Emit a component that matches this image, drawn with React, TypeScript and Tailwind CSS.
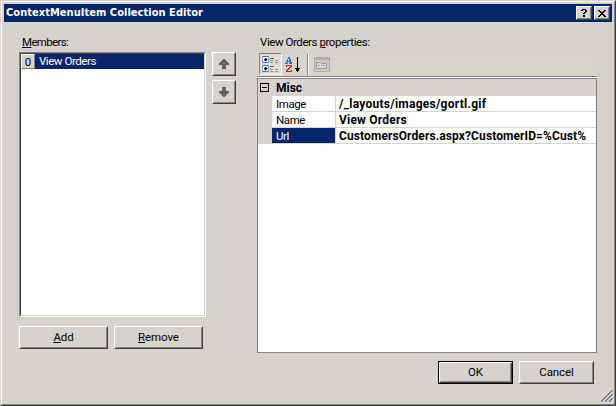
import type { ReactNode } from 'react';

const raised =
  'border border-t-white border-l-white border-r-[#404040] border-b-[#404040]';
const raisedInner =
  'h-full w-full border border-t-[#d6d3ce] border-l-[#d6d3ce] border-r-[#848284] border-b-[#848284] flex items-center justify-center';

function Raised({ className, children, label }: { className: string; children: ReactNode; label?: string }) {
  return (
    <button aria-label={label} className={`${raised} ${className} block bg-[#d6d3ce]`}>
      <span className={raisedInner}>{children}</span>
    </button>
  );
}

function Row({ name, value, spacing, selected }: { name: string; value: string; spacing: string; selected?: boolean }) {
  return (
    <div className="flex h-4">
      <div className="w-[14px] bg-[#d6d3ce]" />
      <div
        className={`w-[63px] border-b border-[#d6d3ce] pl-1 leading-[16px] tracking-[-0.4px] ${selected ? 'bg-[#08246b] text-white' : 'bg-white'}`}
      >
        {name}
      </div>
      <div
        className={`flex-1 whitespace-nowrap border-b border-l border-[#d6d3ce] pl-[3px] text-[12px] font-bold leading-[16px] ${spacing}`}
      >
        {value}
      </div>
    </div>
  );
}

function Arrow({ down }: { down?: boolean }) {
  return (
    <svg width="10" height="10" viewBox="0 0 10 10" className={down ? 'rotate-180' : ''} shapeRendering="crispEdges">
      <path d="M4 0h2v1h1v1h1v1h1v1h1v2H7v4H3V6H0V4h1V3h1V2h1V1h1z" fill="#636163" />
    </svg>
  );
}

export default function App() {
  return (
    <div className="h-[406px] w-[616px] border border-t-[#d6d3ce] border-l-[#d6d3ce] border-r-[#404040] border-b-[#404040] bg-[#d6d3ce] font-[Roboto,'Liberation_Sans',Arial,sans-serif] text-[11.5px] tracking-[-0.1px] text-black">
      <div className="relative flex h-full w-full flex-col border border-t-white border-l-white border-r-[#848284] border-b-[#848284] p-[2px]">
        <header className="flex h-[18px] shrink-0 items-center bg-[#08246b] pl-[2px] pr-[2px]">
          <h1 className="flex-1 whitespace-nowrap font-['DejaVu_Sans_Condensed','DejaVu_Sans',sans-serif] text-[11px] font-bold leading-[18px] tracking-[0.04px] text-white">
            ContextMenuItem Collection Editor
          </h1>
          <Raised label="Help" className="mr-[2px] h-[14px] w-4">
            <svg width="6" height="8" viewBox="0 0 6 8" shapeRendering="crispEdges">
              <path d="M1 0h4v1h1v2H5v1H4v1H2V4h1V3h1V1H2v1H0V1h1zM2 6h2v2H2z" />
            </svg>
          </Raised>
          <Raised label="Close" className="h-[14px] w-4">
            <svg width="8" height="7" viewBox="0 0 8 7" shapeRendering="crispEdges">
              <path d="M0 0h2v1h1v1h2V1h1V0h2v1H7v1H6v1H5v1h1v1h1v1h1v1H6V6H5V5H3v1H2v1H0V6h1V5h1V4h1V3H2V2H1V1H0z" />
            </svg>
          </Raised>
        </header>

        <main className="flex h-[330px] pl-[15px] pt-[14px]">
          <section className="w-[187px]">
            <div className="h-4 pl-[3px] leading-[13px] tracking-[-0.65px]">
              <span className="underline">M</span>embers:
            </div>
            <div className="h-[265px] border border-t-[#848284] border-l-[#848284] border-r-white border-b-white">
              <div className="h-full border border-t-[#404040] border-l-[#404040] border-r-[#d6d3ce] border-b-[#d6d3ce] bg-white">
                <div className="flex h-[15px] bg-[#08246b] leading-[15px] text-white">
                  <div className="h-[15px] w-[14px] border border-t-white border-l-white border-r-[#848284] border-b-[#848284] bg-[#d6d3ce] text-center leading-[14px] text-black">
                    0
                  </div>
                  <span className="pl-1 tracking-[-0.45px]">View Orders</span>
                </div>
              </div>
            </div>
            <div className="mt-[9px] flex gap-[6px]">
              <Raised className="h-[23px] w-[89px]"><span><span className="underline">A</span>dd</span></Raised>
              <Raised className="h-[23px] w-[89px]"><span><span className="underline">R</span>emove</span></Raised>
            </div>
          </section>

          <div className="ml-[6px] mt-4 flex w-6 flex-col gap-1">
            <Raised label="Move up" className="h-6 w-6"><Arrow /></Raised>
            <Raised label="Move down" className="h-6 w-6"><Arrow down /></Raised>
          </div>

          <section className="ml-[21px] w-[340px]">
            <div className="h-4 pl-[3px] leading-[13px] tracking-[-0.44px]">
              View Orders <span className="underline">p</span>roperties:
            </div>
            <div className="flex h-[26px] items-center border-b border-white bg-[#d9d3ce] pl-[2px] shadow-[inset_0_-1px_0_#848284]">
              <div className="mb-[1px] flex h-[22px] w-[23px] items-center border border-t-[#848284] border-l-[#848284] border-r-white border-b-white bg-[#e1dbd6] pl-[2px]">
                <svg width="16" height="16" viewBox="0 0 16 16" shapeRendering="crispEdges">
                  <path d="M0 0h7v7H0zM0 9h7v7H0z" fill="#6ba6e7" />
                  <path d="M1 0h5v1H1zm0 6h5v1H1zM1 9h5v1H1zm0 6h5v1H1z" fill="#3975bd" />
                  <path d="M1 1h5v5H1zM1 10h5v5H1z" fill="white" />
                  <path d="M3 2h1v3H3zM2 3h3v1H2zM3 11h1v3H3zM2 12h3v1H2z" fill="black" stroke="black" strokeWidth=".4" />
                  <path d="M8 2h4v1H8zM8 10h4v1H8z" fill="#636163" />
                  <path d="M8 4h3v1H8zm5 0h3v1h-3zM8 6h3v1H8zm5 0h3v1h-3zM8 13h3v1H8zm5 0h3v1h-3zM8 15h3v1H8zm5 0h3v1h-3z" fill="#8c96a8" />
                </svg>
              </div>
              <svg className="ml-[3px]" width="16" height="16" viewBox="0 0 16 16" shapeRendering="crispEdges">
                <path d="M3 0h2v2h1v3h1v2H4V6h1V5H2v1h1v1H0V6h1V4h1V2h1zM3 2v2h1V2z" fill="#3969ad" fillRule="evenodd" />
                <path d="M1 8h6v2H6v1H5v1H4v1H3v1h3v-1h1v2H1v-2h1v-1h1v-1h1v-1h1V9H2v1H1z" fill="#a53c42" />
                <path d="M12 0h1v11h2v1h-1v2h-1v1h-1v-1h-1v-2h-1v-1h2z" />
              </svg>
              <div className="ml-[6px] mr-[5px] h-[22px] w-[2px] border-l border-[#848284] bg-white" />
              <svg width="16" height="15" viewBox="0 0 16 15" shapeRendering="crispEdges">
                <path d="M.5.5h15v14H.5z" fill="#cecbc6" stroke="#adaaa8" />
                <path d="M1 1h14v2H1z" fill="#b5b2ad" />
                <path d="M2.5 5.5h4l1 1h5v5h-10z" fill="#dedbd6" stroke="#9c9a98" />
                <path d="M4 8h2v1H4zm3 0h4v1H7z" fill="#9c9a98" />
              </svg>
            </div>
            <div className="h-[275px] border border-[#848284] bg-white">
              <div className="flex h-[17px] items-center bg-[#d6d3ce]">
                <svg className="ml-[2px] mr-[7px]" width="9" height="9" viewBox="0 0 9 9" shapeRendering="crispEdges">
                  <path d="M.5.5h8v8h-8zM2 4.5h5" fill="none" stroke="black" />
                </svg>
                <span className="text-[12px] font-bold tracking-normal">Misc</span>
              </div>
              <Row name="Image" value="/_layouts/images/gortl.gif" spacing="tracking-[0.25px]" />
              <Row name="Name" value="View Orders" spacing="tracking-[0.2px]" />
              <Row name="Url" value="CustomersOrders.aspx?CustomerID=%Cust%" spacing="tracking-[0.1px]" selected />
            </div>
          </section>
        </main>

        <footer className="mt-[9px] flex justify-end gap-[6px] pr-[18px]">
          <div className="h-[23px] w-[75px] border border-black">
            <Raised className="h-full w-full">OK</Raised>
          </div>
          <Raised className="h-[23px] w-[75px]">Cancel</Raised>
        </footer>
        <svg className="absolute bottom-[2px] right-[1px]" width="13" height="13" viewBox="0 0 13 13">
          <path d="M0 12L12 0M4 12L12 4M8 12L12 8" stroke="white" />
          <path d="M1 12.5L12.5 1M5 12.5L12.5 5M9 12.5L12.5 9" stroke="#737173" strokeWidth="1.5" />
        </svg>
      </div>
    </div>
  );
}
